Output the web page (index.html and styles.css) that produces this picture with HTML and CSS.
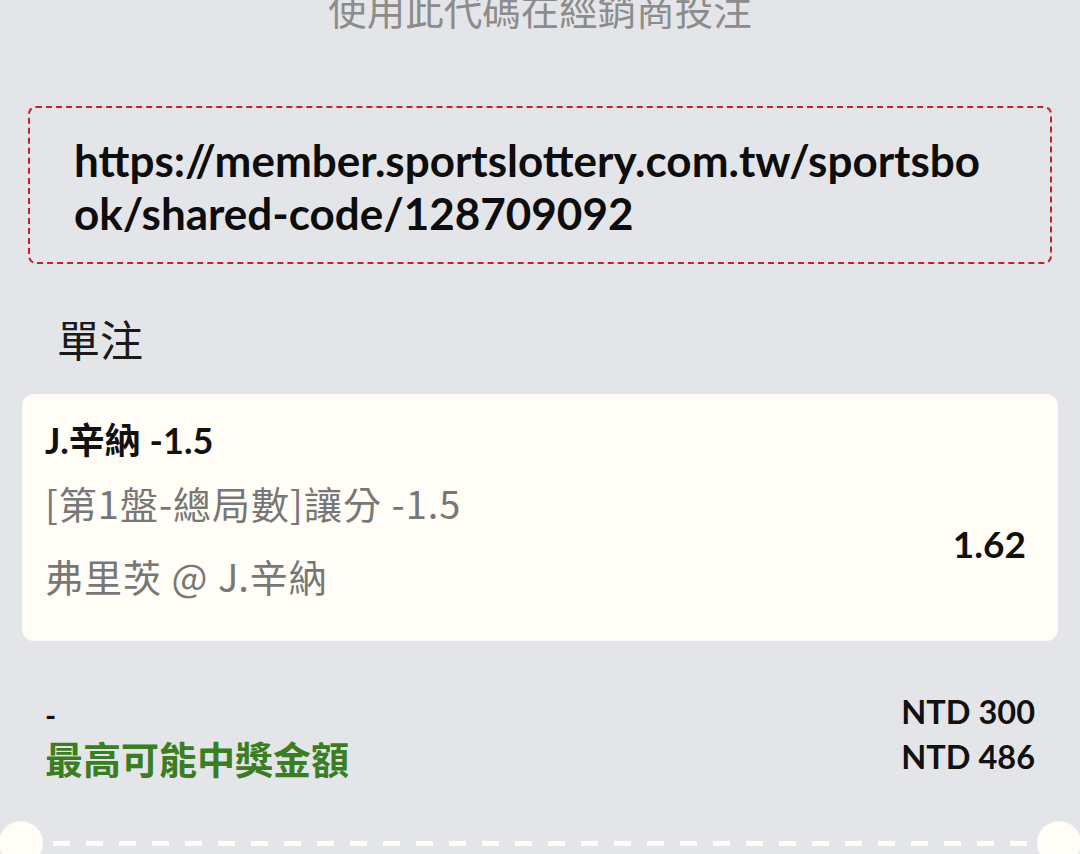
FILE: index.html
```html
<!DOCTYPE html>
<html lang="zh-Hant">
<head>
  <meta charset="UTF-8">
  <meta name="viewport" content="width=device-width, initial-scale=1.0">
  <title>分享投注代碼</title>
  <link rel="stylesheet" href="styles.css">
</head>
<body>
  <div class="page">
    <p class="hint">使用此代碼在經銷商投注</p>

    <div class="code-box">
      <p class="code-url">https://member.sportslottery.com.tw/sportsbook/shared-code/128709092</p>
    </div>

    <h2 class="section-title">單注</h2>

    <div class="bet-card">
      <div class="bet-info">
        <p class="bet-pick">J.辛納 -1.5</p>
        <p class="bet-market">[第1盤-總局數]讓分 -1.5</p>
        <p class="bet-event">弗里茨 @ J.辛納</p>
      </div>
      <div class="bet-odds">1.62</div>
    </div>

    <div class="summary">
      <div class="summary-left">
        <p class="stake-label">-</p>
        <p class="win-label">最高可能中獎金額</p>
      </div>
      <div class="summary-right">
        <p>NTD 300</p>
        <p>NTD 486</p>
      </div>
    </div>

    <div class="tear">
      <span class="notch notch-left"></span>
      <span class="tear-line"></span>
      <span class="notch notch-right"></span>
    </div>
  </div>
</body>
</html>
```

FILE: styles.css
```css
body {
  margin: 0;
  background-color: #e4e5e8;
  font-family: 'Lato', 'Noto Sans CJK TC', sans-serif;
  color: #111;
  overflow: hidden;
}
p {
  margin: 0;
}
.page {
  width: 1080px;
  height: 854px;
  overflow: hidden;
}
.hint {
  margin-top: -17px;
  text-align: center;
  font-family: 'Noto Sans CJK TC', sans-serif;
  font-size: 38.5px;
  line-height: 50px;
  color: #8c8c8c;
}
.code-box {
  margin: 73px 28px 0 28px;
  height: 158px;
  box-sizing: border-box;
  border: 2px dashed #c4202e;
  border-radius: 8px;
  padding: 26px 60px 0 44px;
}
.code-url {
  font-weight: 700;
  font-size: 44px;
  line-height: 53px;
  word-break: break-all;
  color: #0d0d0d;
}
.section-title {
  margin: 46px 0 0 57px;
  font-family: 'Noto Sans CJK TC', sans-serif;
  font-weight: 400;
  font-size: 43px;
  line-height: 56px;
  color: #1a1a1a;
}
.bet-card {
  margin: 28px 22px 0 22px;
  height: 247px;
  box-sizing: border-box;
  background-color: #fffdf5;
  border-radius: 12px;
  padding: 22px 32px 0 23px;
  display: flex;
  justify-content: space-between;
  align-items: center;
}
.bet-info {
  align-self: flex-start;
}
.bet-pick {
  font-weight: 700;
  font-size: 36px;
  line-height: 48px;
}
.bet-market,
.bet-event {
  font-family: 'Noto Sans CJK TC', sans-serif;
  font-size: 38px;
  letter-spacing: 1px;
  color: #777;
  line-height: 50px;
}
.bet-market {
  margin-top: 14px;
}
.bet-event {
  margin-top: 23px;
}
.bet-odds {
  font-weight: 700;
  font-size: 37px;
  margin-top: 30px;
}
.summary {
  margin: 50px 45px 0 45px;
  display: flex;
  justify-content: space-between;
  align-items: flex-start;
}
.stake-label {
  font-weight: 700;
  font-size: 30px;
  line-height: 40px;
  margin-top: 4px;
}
.win-label {
  font-weight: 700;
  font-size: 38px;
  line-height: 46px;
  color: #3a7d22;
  font-family: 'Noto Sans CJK TC', sans-serif;
}
.summary-right {
  text-align: right;
  font-weight: 700;
  font-size: 32.5px;
  line-height: 45px;
  margin-top: -2px;
}
.tear {
  margin-top: 40px;
  display: flex;
  align-items: center;
}
.notch {
  width: 44px;
  height: 44px;
  border-radius: 50%;
  background-color: #fffdf5;
  flex-shrink: 0;
}
.notch-left {
  margin-left: -1px;
}
.notch-right {
  margin-right: -1px;
}
.tear-line {
  flex: 1;
  height: 5px;
  margin: 0 10px;
  background-image: linear-gradient(to right, #fffdf5 0, #fffdf5 17px, transparent 17px);
  background-size: 33px 5px;
  background-repeat: repeat-x;
}
```
